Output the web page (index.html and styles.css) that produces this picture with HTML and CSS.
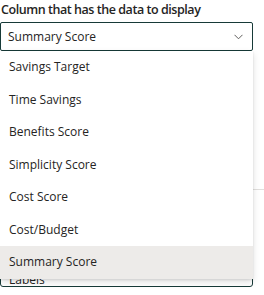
FILE: index.html
```html
<!DOCTYPE html>
<html lang="en">
<head>
    <meta charset="UTF-8">
    <meta name="viewport" content="width=device-width, initial-scale=1.0">
    <title>Column picker</title>
    <link rel="stylesheet" href="styles.css">
</head>
<body>
<div class="pane">
    <div class="field">
        <div class="field-label">Column that has the data to display</div>
        <div class="dropdown">
            <span class="dropdown-value">Summary Score</span>
            <svg class="chevron" width="9" height="6" viewBox="0 0 9 6">
                <path d="M0.5 0.8 L4.5 4.8 L8.5 0.8" fill="none" stroke="#605e5c" stroke-width="1"/>
            </svg>
        </div>
    </div>
    <div class="spacer"></div>
    <div class="divider"></div>
    <div class="spacer2"></div>
    <div class="field">
        <div class="textbox">Labels</div>
    </div>

    <!-- open menu of the dropdown -->
    <ul class="menu">
        <li>Savings Target</li>
        <li>Time Savings</li>
        <li>Benefits Score</li>
        <li>Simplicity Score</li>
        <li>Cost Score</li>
        <li>Cost/Budget</li>
        <li class="selected">Summary Score</li>
    </ul>
</div>
</body>
</html>
```

FILE: styles.css
```css
body { margin: 0; padding: 0; background: #fff; font-family: "Open Sans", "Noto Sans", sans-serif; color: #252423; }
.pane { position: relative; width: 264px; height: 295px; overflow: hidden; }
.field { width: 253px; }
.field-label { font-size: 12.5px; font-weight: 600; letter-spacing: -0.45px; line-height: 18px; padding: 1px 0 3px 1px; }
.dropdown { display: flex; align-items: center; justify-content: space-between; height: 27px; border: 1px solid #173a38; border-radius: 2px; padding: 0 9px 0 7px; font-size: 12px; }
.chevron { display: block; margin-top: 1px; }
.spacer { height: 138px; }
.divider { height: 1px; background: #e1dfdd; }
.spacer2 { height: 67px; }
.textbox { border: 1px solid #173a38; border-radius: 3px; font-size: 12px; line-height: 20px; padding: 12px 8px 0; box-sizing: border-box; height: 30px; overflow: hidden; }

.menu {
    position: absolute;
    top: 51px;
    left: 0;
    width: 253px;
    margin: 0;
    padding: 0;
    list-style: none;
    background: #fff;
    box-shadow: 0 3px 7px rgba(0, 0, 0, 0.13), 0 1px 2px rgba(0, 0, 0, 0.1);
}
.menu li { height: 32.5px; line-height: 32.5px; padding-left: 9px; font-size: 12px; }
.menu li.selected { background: #edebe9; }
```
